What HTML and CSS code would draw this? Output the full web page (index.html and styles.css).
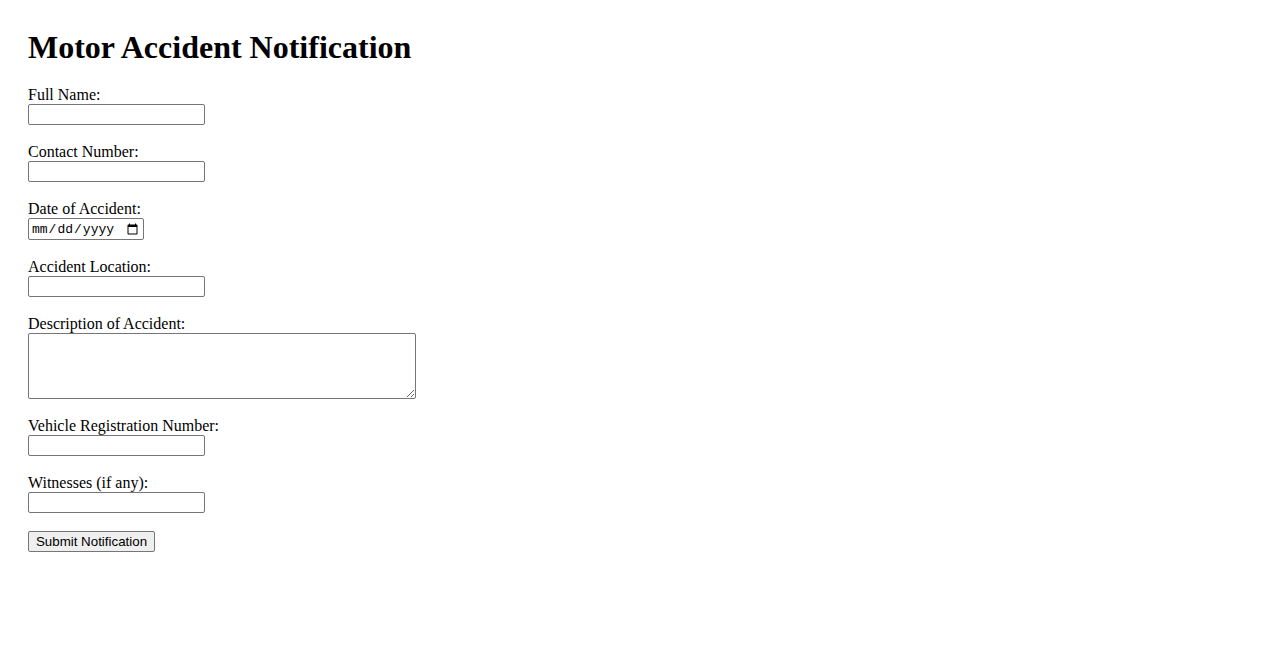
FILE: index.html
```
<!DOCTYPE html>
<html lang="en">
<head>
    <meta charset="UTF-8">
    <meta name="viewport" content="width=device-width, initial-scale=1.0">
    <title>Motor Accident Notification</title>
    <link rel="stylesheet" href="styles.css">
</head>
<body>
    <div class="page">
        <h1 class="title">Motor Accident Notification</h1>

        <form class="notify-form" onsubmit="return false;">
            <div class="field">
                <label for="name">Full Name:</label>
                <input type="text" id="name" class="text-input">
            </div>

            <div class="field">
                <label for="contact">Contact Number:</label>
                <input type="text" id="contact" class="text-input">
            </div>

            <div class="field">
                <label for="date">Date of Accident:</label>
                <input type="date" id="date" class="date-input">
            </div>

            <div class="field">
                <label for="location">Accident Location:</label>
                <input type="text" id="location" class="text-input">
            </div>

            <div class="field">
                <label for="description">Description of Accident:</label>
                <textarea id="description" class="text-area"></textarea>
            </div>

            <div class="field">
                <label for="vehicle">Vehicle Registration Number:</label>
                <input type="text" id="vehicle" class="text-input">
            </div>

            <div class="field">
                <label for="witnesses">Witnesses (if any):</label>
                <input type="text" id="witnesses" class="text-input">
            </div>

            <button type="submit" class="submit-btn">Submit Notification</button>
        </form>
    </div>
</body>
</html>
```

FILE: styles.css
```
* {
    box-sizing: border-box;
}

body {
    margin: 0;
    background: #ffffff;
    color: #000000;
    font-family: "Liberation Serif", "Times New Roman", serif;
    font-size: 16px;
}

.page {
    padding: 28px;
}

.title {
    margin: 1px 0 20px;
    font-size: 32px;
    font-weight: bold;
    line-height: 37px;
}

.notify-form {
    display: flex;
    flex-direction: column;
    align-items: flex-start;
}

.field {
    display: flex;
    flex-direction: column;
    align-items: flex-start;
    margin-bottom: 18px;
}

.field label {
    line-height: 18px;
    height: 18px;
}

.text-input,
.date-input,
.text-area {
    margin: 0;
    border: 1px solid #767676;
    border-radius: 2px;
    background: #ffffff;
    font-family: "Liberation Sans", Arial, sans-serif;
    font-size: 13.33px;
}

.text-input {
    width: 177px;
    height: 21px;
    padding: 1px 2px;
}

.date-input {
    width: 116px;
    height: 22px;
    padding: 1px 2px;
    font-family: "Liberation Mono", "Courier New", monospace;
    font-size: 13px;
}

.text-area {
    width: 388px;
    height: 66px;
    padding: 2px;
    font-family: "Liberation Mono", monospace;
}

.submit-btn {
    margin: 0;
    width: 127px;
    height: 21px;
    padding: 1px 6px;
    border: 1px solid #767676;
    border-radius: 2px;
    background: #efefef;
    color: #000000;
    font-family: "Liberation Sans", Arial, sans-serif;
    font-size: 13.33px;
    line-height: 17px;
}
```
